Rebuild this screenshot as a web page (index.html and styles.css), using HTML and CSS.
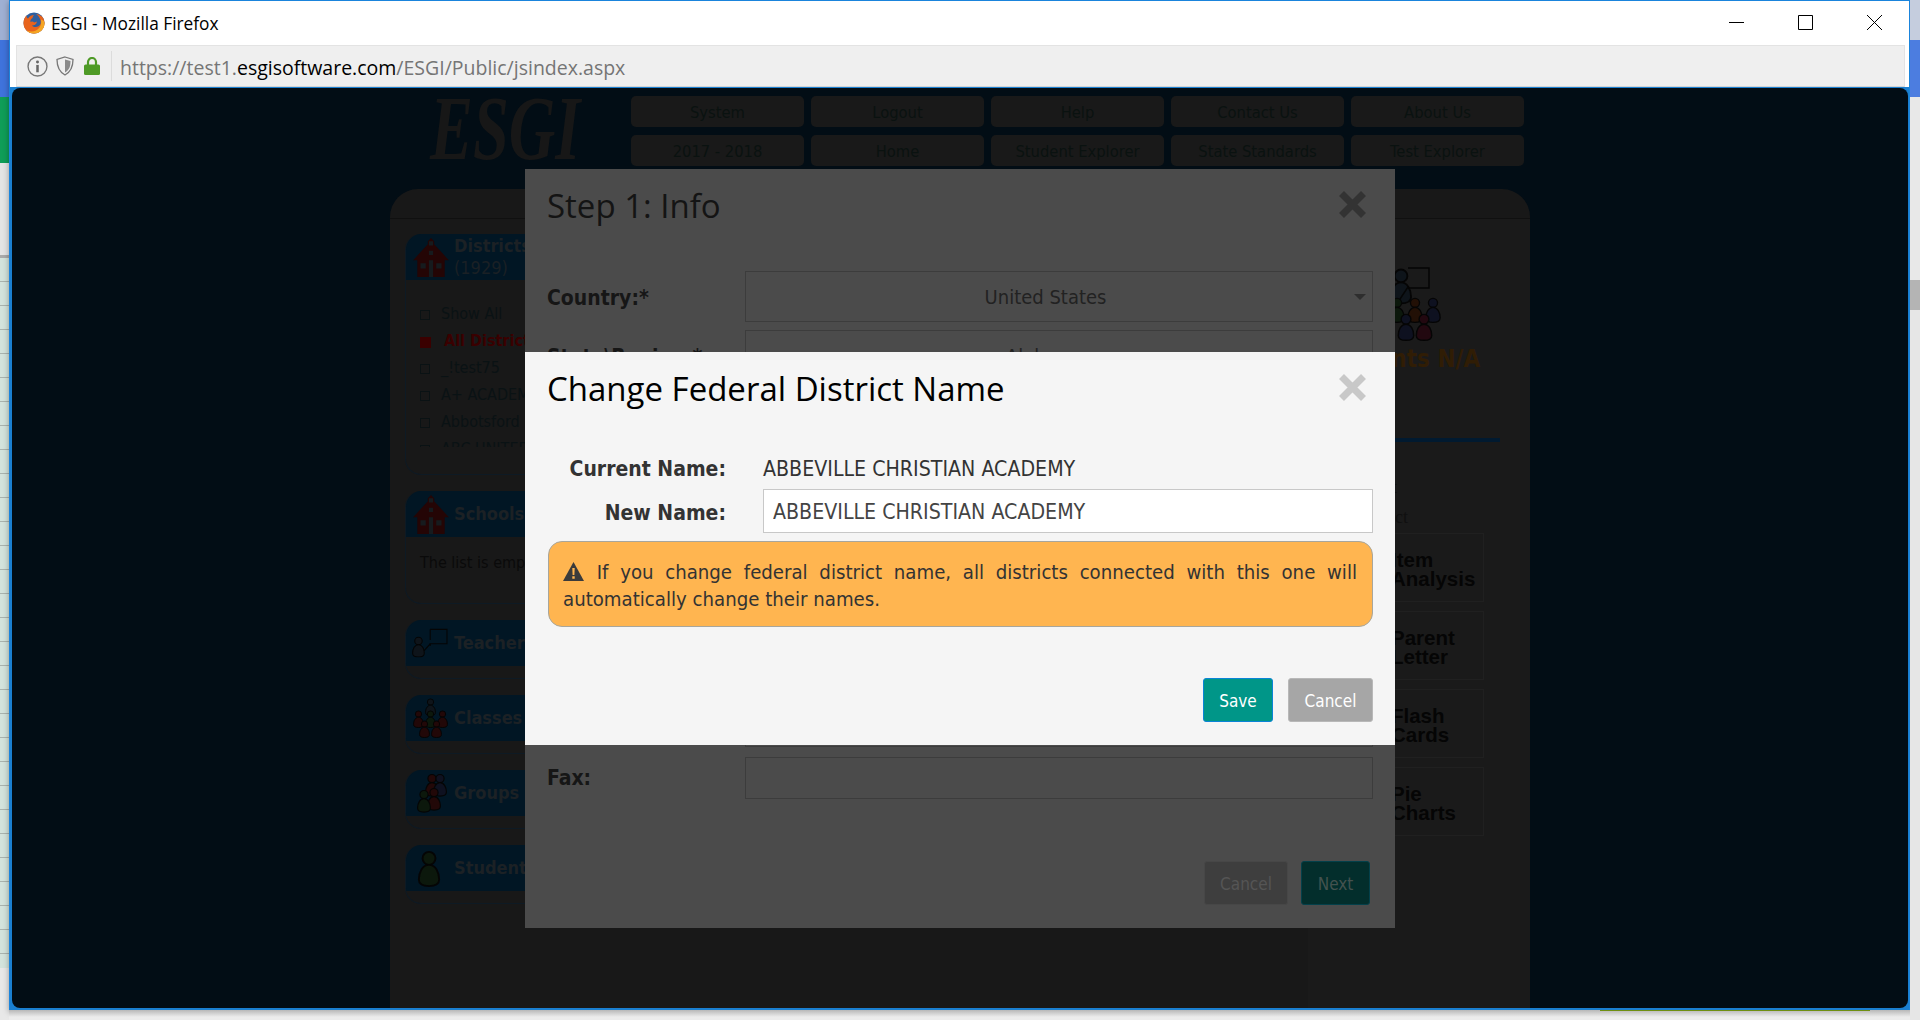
FILE: index.html
```html
<!DOCTYPE html>
<html lang="en">
	<head>
		<meta charset="UTF-8" />
		<title>ESGI - Mozilla Firefox</title>
		<link rel="stylesheet" href="styles.css">
	</head>
	<body>
		<svg class="defs" width="0" height="0">
			<symbol id="house" viewBox="0 0 34 38">
				<path d="M17 1l3 3v3l14 15h-4v16H4V22H0L14 7V4z" fill="#240505"/>
				<path d="M15 4h4v4h-4zM15 13h4v4h-4zM7 25h5v5H7zM22 25h5v5h-5zM15 22h4v16h-4z" fill="#161b1e"/>
			</symbol>
			<symbol id="person" viewBox="0 0 24 40">
				<circle cx="12" cy="9" r="7" stroke="#050505" stroke-width="2"/>
				<path d="M12 16C5 16 1 24 1 32c0 5 4 7 11 7s11-2 11-7c0-8-4-16-11-16z" stroke="#050505" stroke-width="2"/>
			</symbol>
			<symbol id="board" viewBox="0 0 50 38">
				<use href="#person" x="0" y="10" width="17" height="28" fill="#0e141a"/>
				<path d="M24 1h22v19H24v3" fill="none" stroke="#050505" stroke-width="1.5"/>
				<path d="M24 1v14M24 20l-8 9" fill="none" stroke="#050505" stroke-width="1.5"/>
			</symbol>
		</svg>
		<div class="desktop">
			<div class="strip-left">
				<div class="sl-a"></div>
				<div class="sl-b"></div>
				<div class="sl-c"></div>
				<div class="sl-d"></div>
				<div class="sl-sheet"></div>
				<div class="sl-end"></div>
			</div>

			<div class="window">
				<div class="titlebar">
					<svg class="ff-icon" viewBox="0 0 22 22">
						<circle cx="11" cy="11" r="10.5" fill="#2f5f9e"/>
						<path d="M11 21.5C5 21.5.5 17 .5 11 .5 8 1.5 5.5 3.5 3.5 3.5 5 4 6 5 6.5 6.5 4 9 3 11 3c-1 1-1.500 2-1.500 3C8 7 7 8 7.500 10c1-1 3-.5 3.500.5 1.500 0 2-1 3-1-.5 3-3 4-5 4 2 2.500 7 2 8.500-1.500C18.500 8 16 4 13 2c5 .5 8.500 4 8.500 9 0 6-5 10.500-10.500 10.500z" fill="#e8631c"/>
						<path d="M21.500 11c0 3-1 5.500-3 7.500-2 2-4.500 3-7.500 3-3 0-5.500-1-7.500-3 5 2 10 1 13-3 1.500-2 2-5 1.500-8 2.500 1 3.500 2 3.500 3.500z" fill="#f5a623"/>
					</svg>
					<span class="title-text">ESGI - Mozilla Firefox</span>
					<div class="win-controls">
						<svg viewBox="0 0 15 15"><path d="M0 7.500h15" stroke="#000" stroke-width="1"/></svg>
						<svg viewBox="0 0 15 15"><path d="M.5.500h14v14H.5z" fill="none" stroke="#000" stroke-width="1"/></svg>
						<svg viewBox="0 0 15 15"><path d="M0 0l15 15M15 0L0 15" stroke="#000" stroke-width="1"/></svg>
					</div>
				</div>

				<div class="addressbar">
					<svg class="ico-info" viewBox="0 0 20 20">
						<circle cx="10" cy="10" r="9" fill="none" stroke="#777" stroke-width="1.300"/>
						<circle cx="10" cy="5.800" r="1.400" fill="#666"/>
						<path d="M8.800 8.500h2.400v7H8.800z" fill="#666"/>
					</svg>
					<svg class="ico-shield" viewBox="0 0 18 20">
						<path d="M9 1l8 2.500c0 7-1.500 12-8 15.500C2.500 15.500 1 10.500 1 3.500z" fill="none" stroke="#777" stroke-width="1.300"/>
						<path d="M9 3.500l5.500 1.500c0 5-1 9-5.500 11.500z" fill="#8a8a8a"/>
					</svg>
					<svg class="ico-lock" viewBox="0 0 16 18">
						<path d="M4 8V5a4 4 0 0 1 8 0v3" fill="none" stroke="#4e9a26" stroke-width="2.200"/>
						<rect x="0" y="7.500" width="16" height="10.500" rx="1.500" fill="#4e9a26"/>
					</svg>
					<span class="addr-sep"></span>
					<span class="url">https://test1.<b>esgisoftware.com</b>/ESGI/Public/jsindex.aspx</span>
				</div>

				<div class="viewport">
					<div class="page-bg">
						<div class="page-head">
							<div class="logo">ESGI</div>
							<div class="nav">
								<a>System</a><a>Logout</a><a>Help</a><a>Contact Us</a><a>About Us</a>
								<a>2017 - 2018</a><a>Home</a><a>Student Explorer</a><a>State Standards</a><a>Test Explorer</a>
							</div>
						</div>

						<div class="panel">
							<div class="panel-top"></div>
							<div class="panel-body">
								<div class="sidebar">
									<div class="box box-districts">
										<div class="box-head">
											<svg class="head-ico"><use href="#house"/></svg>
											<div class="head-txt"><b>Districts</b><br>(1929)</div>
										</div>
										<ul class="tree">
											<li>Show All</li>
											<li class="sel">All Districts</li>
											<li>_!test75</li>
											<li>A+ ACADEMY</li>
											<li>Abbotsford</li>
											<li>ABC UNITED</li>
										</ul>
									</div>
									<div class="box box-schools">
										<div class="box-head">
											<svg class="head-ico"><use href="#house"/></svg>
											<div class="head-txt"><b>Schools</b></div>
										</div>
										<p class="empty">The list is empty</p>
									</div>
									<div class="box box-small">
										<div class="box-head">
											<svg class="head-ico"><use href="#board"/></svg>
											<div class="head-txt"><b>Teachers</b></div>
										</div>
									</div>
									<div class="box box-small">
										<div class="box-head">
											<svg class="head-ico" viewBox="0 0 36 40">
												<use href="#person" x="12" y="0" width="11" height="18" fill="#0e141a"/>
												<use href="#person" x="0" y="12" width="11" height="18" fill="#220808"/>
												<use href="#person" x="12" y="12" width="11" height="18" fill="#0c180c"/>
												<use href="#person" x="24" y="12" width="11" height="18" fill="#220808"/>
												<use href="#person" x="6" y="22" width="11" height="18" fill="#220808"/>
												<use href="#person" x="18" y="22" width="11" height="18" fill="#220808"/>
											</svg>
											<div class="head-txt"><b>Classes</b></div>
										</div>
									</div>
									<div class="box box-small">
										<div class="box-head">
											<svg class="head-ico" viewBox="0 0 36 40">
												<use href="#person" x="12" y="0" width="14" height="24" fill="#220808"/>
												<use href="#person" x="20" y="0" width="14" height="24" fill="#0e1120"/>
												<use href="#person" x="14" y="14" width="14" height="24" fill="#220808"/>
												<use href="#person" x="4" y="16" width="14" height="24" fill="#0c180c"/>
											</svg>
											<div class="head-txt"><b>Groups</b></div>
										</div>
									</div>
									<div class="box box-small">
										<div class="box-head">
											<svg class="head-ico"><use href="#person" x="5" y="2" width="24" height="37" fill="#0c180c"/></svg>
											<div class="head-txt"><b>Students</b></div>
										</div>
									</div>
								</div>

								<div class="reports">
									<div class="stat">
										<svg class="stat-ico" viewBox="0 0 60 74">
											<use href="#person" x="2" y="0" width="22" height="38" fill="#0e141a"/>
											<path d="M20 1h21v20H20M20 20l-8 12" fill="none" stroke="#050505" stroke-width="1.500"/>
											<use href="#person" x="0" y="30" width="18" height="26" fill="#0c180c"/>
											<use href="#person" x="18" y="30" width="18" height="26" fill="#221006"/>
											<use href="#person" x="36" y="30" width="18" height="26" fill="#0e1120"/>
											<use href="#person" x="9" y="46" width="18" height="28" fill="#0e1120"/>
											<use href="#person" x="27" y="46" width="18" height="28" fill="#220810"/>
										</svg>
										<div class="stat-txt">Students N/A</div>
									</div>
									<div class="rep-bar"></div>
									<div class="rep-hint hint-a">Test</div>
									<div class="rep-hint hint-b">Select</div>
									<div class="card">Item<br>Analysis</div>
									<div class="card">Parent<br>Letter</div>
									<div class="card">Flash<br>Cards</div>
									<div class="card">Pie<br>Charts</div>
								</div>
							</div>
						</div>

						<div class="modal modal-back">
							<div class="modal-head">
								<h2>Step 1: Info</h2>
								<svg class="close-x" viewBox="0 0 29 29"><path d="M3.500 3.500l22 22M25.500 3.500l-22 22" stroke-width="7"/></svg>
							</div>
							<div class="back-form">
								<label>Country:*</label>
								<div class="back-box">United States<i class="caret"></i></div>
								<label>State\Region:*</label>
								<div class="back-box">Alabama<i class="caret"></i></div>
								<label></label>
								<div class="back-box box-hidden"></div>
								<label>Fax:</label>
								<div class="back-box box-fax"></div>
							</div>
							<div class="back-foot">
								<button class="btn btn-dim">Cancel</button>
								<button class="btn btn-dark">Next</button>
							</div>
						</div>

						<div class="modal modal-front">
							<div class="modal-head">
								<h2>Change Federal District Name</h2>
								<svg class="close-x" viewBox="0 0 29 29"><path d="M3.500 3.500l22 22M25.500 3.500l-22 22" stroke-width="7"/></svg>
							</div>
							<div class="name-form">
								<label>Current Name:</label>
								<div class="cur-name">ABBEVILLE CHRISTIAN ACADEMY</div>
								<label>New Name:</label>
								<input class="new-name" type="text" value="ABBEVILLE CHRISTIAN ACADEMY">
							</div>
							<div class="warning">
								<svg class="warn-ico" viewBox="0 0 21 19"><path d="M10.500 0L21 19H0z" fill="#3b3b3b"/><path d="M9.300 6h2.400l-.3 7H9.600zM9.300 14.300h2.400v2.400H9.300z" fill="#ffb550"/></svg>
								If you change federal district name, all districts connected with this one will automatically change their names.
							</div>
							<div class="front-foot">
								<button class="btn btn-save">Save</button>
								<button class="btn btn-cancel">Cancel</button>
							</div>
						</div>
					</div>
				</div>
			</div>

			<div class="strip-right">
				<div class="sr-a"></div>
				<div class="sr-b"></div>
				<div class="sr-c"></div>
				<div class="sr-thumb"></div>
				<div class="sr-rest"></div>
			</div>
			<div class="strip-bottom"><div class="green-line"></div></div>
		</div>
	</body>
</html>
```

FILE: styles.css
```css
* {
	box-sizing: border-box;
}
html, body {
	margin: 0;
	padding: 0;
	overflow: hidden;
}
.defs {
	display: block;
	height: 0;
}
.desktop {
	display: grid;
	grid-template-columns: 9px 1901px 10px;
	grid-template-rows: 1010px 10px;
	width: 1920px;
	height: 1020px;
	background: #ececec;
}

/* what shows of the desktop round the window */
.strip-left {
	grid-row: 1 / 3;
	display: flex;
	flex-direction: column;
}
.sl-a { height: 40px; background: #9fb0d3; }
.sl-b { height: 57px; background: #3f73dc; }
.sl-c { height: 66px; background: #0f9d58; }
.sl-d {
	height: 95px;
	background: #e4e4e4;
	border-bottom: 3px solid #aaa;
}
.sl-sheet {
	height: 710px;
	background: repeating-linear-gradient(#d3e3dc 0, #d3e3dc 23px, #a9b3ae 23px, #a9b3ae 24px);
}
.sl-end { flex: 1; background: #e8e8e8; }

.strip-right {
	grid-row: 1 / 3;
	grid-column: 3;
	display: flex;
	flex-direction: column;
	box-shadow: inset 6px 0 6px -3px rgba(0,0,0,.22);
}
.sr-a { height: 40px; background: #c5cdde; }
.sr-b { height: 57px; background: #4c7de0; }
.sr-c { height: 183px; background: #e8e8e8; }
.sr-thumb { height: 30px; background: #b4b4b4; }
.sr-rest { flex: 1; background: #e6e6e6; }

.strip-bottom {
	grid-column: 2;
	grid-row: 2;
	background: linear-gradient(#b8b8b8, #ececec 7px);
}
.green-line {
	width: 270px;
	height: 1px;
	margin-left: 1591px;
	background: #6f8f10;
}

/* browser window */
.window {
	display: flex;
	flex-direction: column;
	background: #fff;
	border: 1px solid #1a84dc;
	border-bottom: 0;
	box-shadow: 0 2px 6px rgba(0,0,0,.35);
	font-family: "Open Sans", sans-serif;
}
.titlebar {
	display: flex;
	align-items: center;
	height: 44px;
	padding-left: 13px;
}
.ff-icon {
	width: 22px;
	height: 22px;
	margin-right: 6px;
}
.title-text {
	font-size: 17.3px;
	color: #000;
}
.win-controls {
	display: flex;
	gap: 54px;
	margin-left: auto;
	margin-right: 27px;
	padding-bottom: 2px;
}
.win-controls svg {
	width: 15px;
	height: 15px;
	display: block;
}
.addressbar {
	display: flex;
	align-items: center;
	height: 42px;
	margin: 0 4px 0 6px;
	padding-left: 10px;
	background: #efefef;
	border: 1px solid #e3e3e3;
	border-bottom-color: #d4d4d4;
}
.ico-info { width: 21px; height: 21px; }
.ico-shield { width: 18px; height: 20px; margin-left: 8px; }
.ico-lock { width: 16px; height: 18px; margin-left: 10px; }
.addr-sep {
	width: 1px;
	height: 30px;
	margin: 0 8px 0 11px;
	background: #dcdcdc;
}
.url {
	font-size: 19.5px;
	padding-top: 2px;
	color: #757575;
}
.url b {
	font-weight: 400;
	color: #000;
}
.viewport {
	flex: 1;
	padding: 1px 1px 2px 2px;
	background: #1a7fd0;
	min-height: 0;
}
.page-bg {
	position: relative;
	display: flex;
	flex-direction: column;
	align-items: center;
	height: 100%;
	border-radius: 8px;
	background: #020d15;
	font-family: "DejaVu Sans Condensed", "DejaVu Sans", sans-serif;
}

/* page behind the overlay */
.page-head {
	display: flex;
	width: 1140px;
	height: 101px;
	padding-top: 8px;
}
.logo {
	width: 241px;
	padding-left: 40px;
	font-family: "Liberation Serif", serif;
	font-weight: 700;
	font-style: italic;
	font-size: 92px;
	line-height: 64px;
	color: #171717;
	transform: scaleX(.7);
	transform-origin: 40px 0;
}
.nav {
	display: grid;
	grid-template-columns: repeat(5, 173px);
	grid-template-rows: 31px 31px;
	gap: 8px 7px;
}
.nav a {
	display: flex;
	align-items: center;
	justify-content: center;
	padding-top: 2px;
	border-radius: 5px;
	background: #191919;
	color: #0a1210;
	font-size: 16.4px;
}
.panel {
	flex: 1;
	width: 1140px;
	border-radius: 28px 28px 0 0;
	background: #181818;
	display: flex;
	flex-direction: column;
	min-height: 0;
}
.panel-top {
	height: 30px;
	border-bottom: 1px solid #101010;
}
.panel-body {
	flex: 1;
	display: flex;
	min-height: 0;
}
.sidebar {
	width: 918px;
	padding: 15px 0 0 15px;
	display: flex;
	flex-direction: column;
	gap: 16px;
}
.box {
	width: 190px;
	border: 1px solid #0e1a24;
	border-top: 0;
	border-radius: 16px;
	overflow: hidden;
}
.box-districts { height: 241px; }
.box-schools { height: 113px; }
.box-small { height: 59px; }
.box-head {
	display: flex;
	align-items: center;
	height: 46px;
	background: #011624;
	color: #1a2025;
	font-size: 18px;
	line-height: 22px;
}
.head-ico {
	width: 38px;
	height: 40px;
	margin: 0 4px 0 6px;
	flex: none;
}
.head-txt b { color: #1c2125; }
.tree {
	list-style: none;
	height: 167px;
	overflow: hidden;
	margin: 0;
	padding: 20px 0 0 14px;
	font-size: 16px;
	color: #0a1214;
}
.tree li {
	height: 27px;
	line-height: 27px;
	padding-left: 21px;
	position: relative;
}
.tree li::before {
	content: "";
	position: absolute;
	left: 0;
	top: 10px;
	width: 8px;
	height: 8px;
	border: 1px solid #0a1214;
}
.tree li.sel {
	color: #3a0000;
	font-weight: 700;
	padding-left: 24px;
}
.tree li.sel::before {
	width: 11px;
	height: 11px;
	background: #3a0000;
	border: 0;
}
.empty {
	margin: 16px 0 0 14px;
	font-size: 16px;
	color: #0a0a0a;
}
.reports {
	flex: 1;
	padding: 48px 0 0 12px;
	background: #1a1a1a;
}
.stat-ico {
	display: block;
	width: 60px;
	height: 74px;
	margin-left: 68px;
}
.stat-txt {
	width: 148px;
	margin-top: 4px;
	height: 28px;
	line-height: 28px;
	text-align: right;
	font-size: 24px;
	font-weight: 700;
	color: #301d05;
	white-space: nowrap;
}
.rep-bar {
	width: 180px;
	height: 4px;
	margin-top: 65px;
	background: #011a30;
}
.rep-hint {
	font-family: "Liberation Serif", serif;
	font-size: 18px;
	line-height: 20px;
	color: #101010;
	text-align: right;
}
.hint-a {
	width: 77px;
	margin-top: 35px;
}
.hint-b {
	width: 88px;
	margin-top: 10px;
	margin-bottom: 6px;
}
.card {
	width: 164px;
	height: 69px;
	margin-bottom: 9px;
	padding: 16px 0 0 70px;
	border: 1px solid #202020;
	font-family: "Liberation Sans", sans-serif;
	font-weight: 700;
	font-size: 20.5px;
	line-height: 19px;
	color: #050505;
}

/* the two stacked dialogs */
.modal {
	position: absolute;
	left: 513px;
	width: 870px;
	font-family: "DejaVu Sans Condensed", "DejaVu Sans", sans-serif;
}
.modal-back {
	top: 81px;
	height: 759px;
	background: #4b4b4b;
	color: #161616;
}
.modal-front {
	top: 264px;
	height: 393px;
	background: #f5f5f5;
	color: #333;
}
.modal-head {
	display: flex;
	align-items: flex-start;
	justify-content: space-between;
	padding: 0 28px 0 22px;
}
.modal h2 {
	margin: 0;
	font-family: "Open Sans", sans-serif;
	font-weight: 400;
	font-size: 33px;
	line-height: 44px;
	padding-top: 15px;
}
.modal-back h2 { color: #141414; }
.modal-front h2 { color: #000; }
.close-x {
	width: 29px;
	height: 29px;
	margin-top: 21px;
	fill: none;
}
.modal-back .close-x { stroke: #333; }
.modal-front .close-x { stroke: #c8c8c8; }
.back-form {
	display: grid;
	grid-template-columns: 198px 628px;
	row-gap: 8px;
	margin: 43px 0 0 22px;
}
.back-form label {
	align-self: center;
	padding-top: 2px;
	font-weight: 700;
	font-size: 21px;
}
.back-box {
	position: relative;
	height: 51px;
	padding: 1px 27px 0 0;
	line-height: 49px;
	text-align: center;
	font-size: 20px;
	border: 1px solid #3c3c3c;
	color: #222;
}
.box-hidden { height: 358px; }
.box-fax {
	height: 42px;
	margin-top: 2px;
}
.caret {
	position: absolute;
	right: 6px;
	top: 22px;
	border: 6px solid transparent;
	border-top-color: #2e2e2e;
	border-bottom: 0;
}
.back-foot {
	display: flex;
	justify-content: flex-end;
	gap: 13px;
	margin: 62px 25px 0 0;
}
.btn {
	height: 44px;
	border-radius: 3px;
	font-family: "DejaVu Sans Condensed", "DejaVu Sans", sans-serif;
	font-size: 17px;
	padding: 2px 0 0;
}
.btn-dim {
	width: 84px;
	background: #3e3e3e;
	border: 1px solid #474747;
	color: #555;
}
.btn-dark {
	width: 69px;
	background: #032e2c;
	border: 1px solid #03404a;
	color: #44524f;
}
.name-form {
	display: grid;
	grid-template-columns: 179px 610px;
	column-gap: 37px;
	margin: 34px 0 0 22px;
}
.name-form label {
	align-self: center;
	padding-top: 3px;
	text-align: right;
	font-weight: 700;
	font-size: 21px;
	color: #333;
}
.cur-name {
	height: 44px;
	line-height: 47px;
	font-size: 21.2px;
}
.new-name {
	height: 44px;
	padding: 0 9px;
	border: 1px solid #c8c8c8;
	background: #fff;
	color: #444;
	font-family: inherit;
	font-size: 21.2px;
}
.warning {
	width: 825px;
	height: 86px;
	margin: 8px 0 0 23px;
	padding: 17px 15px 0 14px;
	background: #ffb550;
	border: 1px solid #a8a69c;
	border-radius: 14px;
	font-size: 20.2px;
	line-height: 27px;
	color: #333;
	text-align: justify;
}
.warn-ico {
	width: 21px;
	height: 19px;
	margin: 0 1px -2px 0;
}
.front-foot {
	display: flex;
	justify-content: flex-end;
	gap: 15px;
	margin: 51px 22px 0 0;
}
.btn-save {
	width: 70px;
	background: #009688;
	border: 1px solid #0a84d6;
	color: #fff;
}
.btn-cancel {
	width: 85px;
	background: #a6a6a6;
	border: 1px solid #b8b8b8;
	color: #fff;
}
```
